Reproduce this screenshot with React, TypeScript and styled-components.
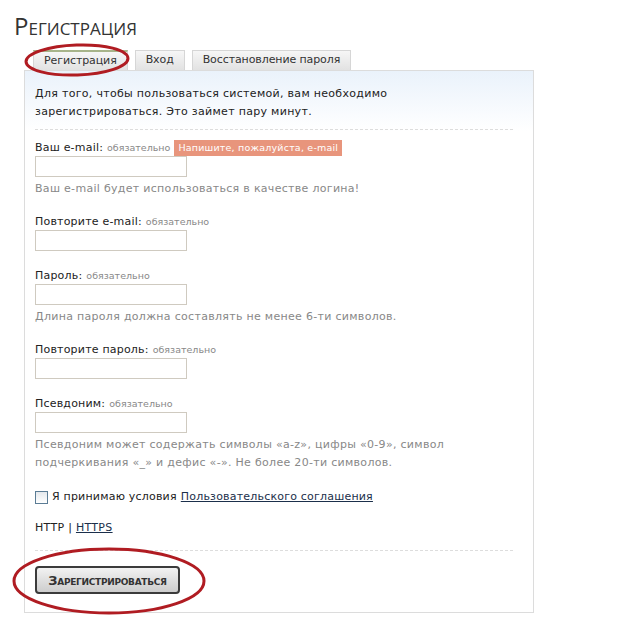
import React from 'react';
import styled, { createGlobalStyle } from 'styled-components';

const GlobalStyle = createGlobalStyle`
  html, body {
    margin: 0;
    padding: 0;
    background: #fff;
  }
  body {
    font-family: "DejaVu Sans", Verdana, sans-serif;
    color: #222;
  }
`;

const Page = styled.div`
  position: relative;
  width: 640px;
  height: 629px;
  overflow: hidden;
  padding: 11px 0 0 24px;
  box-sizing: border-box;
`;

const Title = styled.h1`
  margin: 0 0 0 -10px;
  font-family: "Open Sans", "DejaVu Sans", sans-serif;
  font-weight: 400;
  font-size: 24px;
  font-variant: small-caps;
  line-height: 30px;
  color: #333;
`;

const Tabs = styled.div`
  display: flex;
  gap: 7px;
  margin: 8px 0 0 9px;
  height: 21px;
  align-items: flex-end;
`;

const Tab = styled.div<{ $active?: boolean }>`
  height: 20px;
  box-sizing: border-box;
  padding: 0 10px;
  font-size: 11px;
  letter-spacing: -0.1px;
  line-height: 18px;
  color: #333;
  border: 1px solid #d6d6d6;
  border-bottom: none;
  border-top: ${(p) => (p.$active ? '2px solid #a7b48a' : '1px solid #d6d6d6')};
  background: linear-gradient(#f6f6f6, #e2e2e2);
  white-space: nowrap;
`;

const Panel = styled.div`
  width: 510px;
  box-sizing: border-box;
  border: 1px solid #dcdcdc;
  background: linear-gradient(#eaf2fb 0px, #fff 60px);
  padding: 14px 20px 18px 10px;
  font-size: 11px;
`;

const Intro = styled.p`
  margin: 0;
  line-height: 18px;
  letter-spacing: 0.3px;
`;

const Dashed = styled.hr<{ $gap?: number }>`
  border: none;
  border-top: 1px dashed #ddd;
  margin: ${(p) => p.$gap ?? 8}px 0 0 0;
`;

const Field = styled.div<{ $first?: boolean }>`
  margin-top: ${(p) => (p.$first ? 9 : 16)}px;
`;

const LabelRow = styled.div`
  display: flex;
  align-items: baseline;
  gap: 4px;
  line-height: 17px;
  letter-spacing: 0.2px;
`;

const Required = styled.span`
  font-size: 9.5px;
  color: #888;
  letter-spacing: 0;
`;

const ErrorBadge = styled.span`
  background: #e8957c;
  color: #fff;
  font-size: 9.5px;
  padding: 2px 4px;
  line-height: 12px;
`;

const Input = styled.input`
  display: block;
  width: 152px;
  height: 21px;
  box-sizing: border-box;
  border: 1px solid #cfcac0;
  background: #fff;
  margin: 0;
`;

const Hint = styled.div`
  color: #888;
  line-height: 18px;
  margin: 3px 0 -1px;
  letter-spacing: 0.3px;
`;

const CheckRow = styled.label`
  display: flex;
  align-items: center;
  gap: 4px;
  margin-top: 18px;
  line-height: 16px;
  letter-spacing: 0.2px;
`;

const Box = styled.span`
  display: inline-block;
  width: 11px;
  height: 11px;
  border: 1px solid #5b7c95;
  background: linear-gradient(#e4e8ec, #fff);
`;

const Link = styled.a`
  color: #1b2f4b;
  text-decoration: underline;
`;

const Proto = styled.div`
  margin-top: 15px;
  line-height: 16px;
  letter-spacing: 0.3px;
`;

const Submit = styled.button`
  display: block;
  margin-top: 15px;
  width: 145px;
  height: 28px;
  border: 2px solid #3b3b3b;
  border-radius: 4px;
  background: linear-gradient(#f2f2f2, #cdcdcd);
  font-family: "DejaVu Sans", sans-serif;
  font-weight: 700;
  font-size: 13px;
  letter-spacing: -0.3px;
  font-variant: small-caps;
  color: #333;
  padding: 0;
`;

const Annotation = styled.svg`
  position: absolute;
  left: 0;
  top: 0;
  pointer-events: none;
`;

const fields = [
  { label: 'Ваш e-mail:', error: 'Напишите, пожалуйста, e-mail', hint: ['Ваш e-mail будет использоваться в качестве логина!'] },
  { label: 'Повторите e-mail:' },
  { label: 'Пароль:', hint: ['Длина пароля должна составлять не менее 6-ти символов.'] },
  { label: 'Повторите пароль:' },
  {
    label: 'Псевдоним:',
    hint: [
      'Псевдоним может содержать символы «a-z», цифры «0-9», символ',
      'подчеркивания «_» и дефис «-». Не более 20-ти символов.',
    ],
  },
];

export default function App() {
  return (
    <>
      <GlobalStyle />
      <Page>
        <Title>Регистрация</Title>
        <Tabs>
          <Tab $active>Регистрация</Tab>
          <Tab>Вход</Tab>
          <Tab>Восстановление пароля</Tab>
        </Tabs>
        <Panel>
          <Intro>
            Для того, чтобы пользоваться системой, вам необходимо
            <br />
            зарегистрироваться. Это займет пару минут.
          </Intro>
          <Dashed />
          {fields.map((f, i) => (
            <Field key={i} $first={i === 0}>
              <LabelRow>
                {f.label} <Required>обязательно</Required>
                {f.error ? <ErrorBadge>{f.error}</ErrorBadge> : null}
              </LabelRow>
              <Input />
              {f.hint ? <Hint>{f.hint.map((h, j) => <div key={j}>{h}</div>)}</Hint> : null}
            </Field>
          ))}
          <CheckRow>
            <Box /> Я принимаю условия <Link href="#">Пользовательского соглашения</Link>
          </CheckRow>
          <Proto>
            HTTP | <Link href="#">HTTPS</Link>
          </Proto>
          <Dashed $gap={14} />
          <Submit>Зарегистрироваться</Submit>
        </Panel>
        <Annotation width="640" height="629">
          <ellipse cx="77" cy="60" rx="51" ry="15" fill="none" stroke="#b01c22" strokeWidth="3" transform="rotate(-2 77 60)" />
          <ellipse cx="109" cy="581" rx="95" ry="32" fill="none" stroke="#b01c22" strokeWidth="3" />
        </Annotation>
      </Page>
    </>
  );
}
